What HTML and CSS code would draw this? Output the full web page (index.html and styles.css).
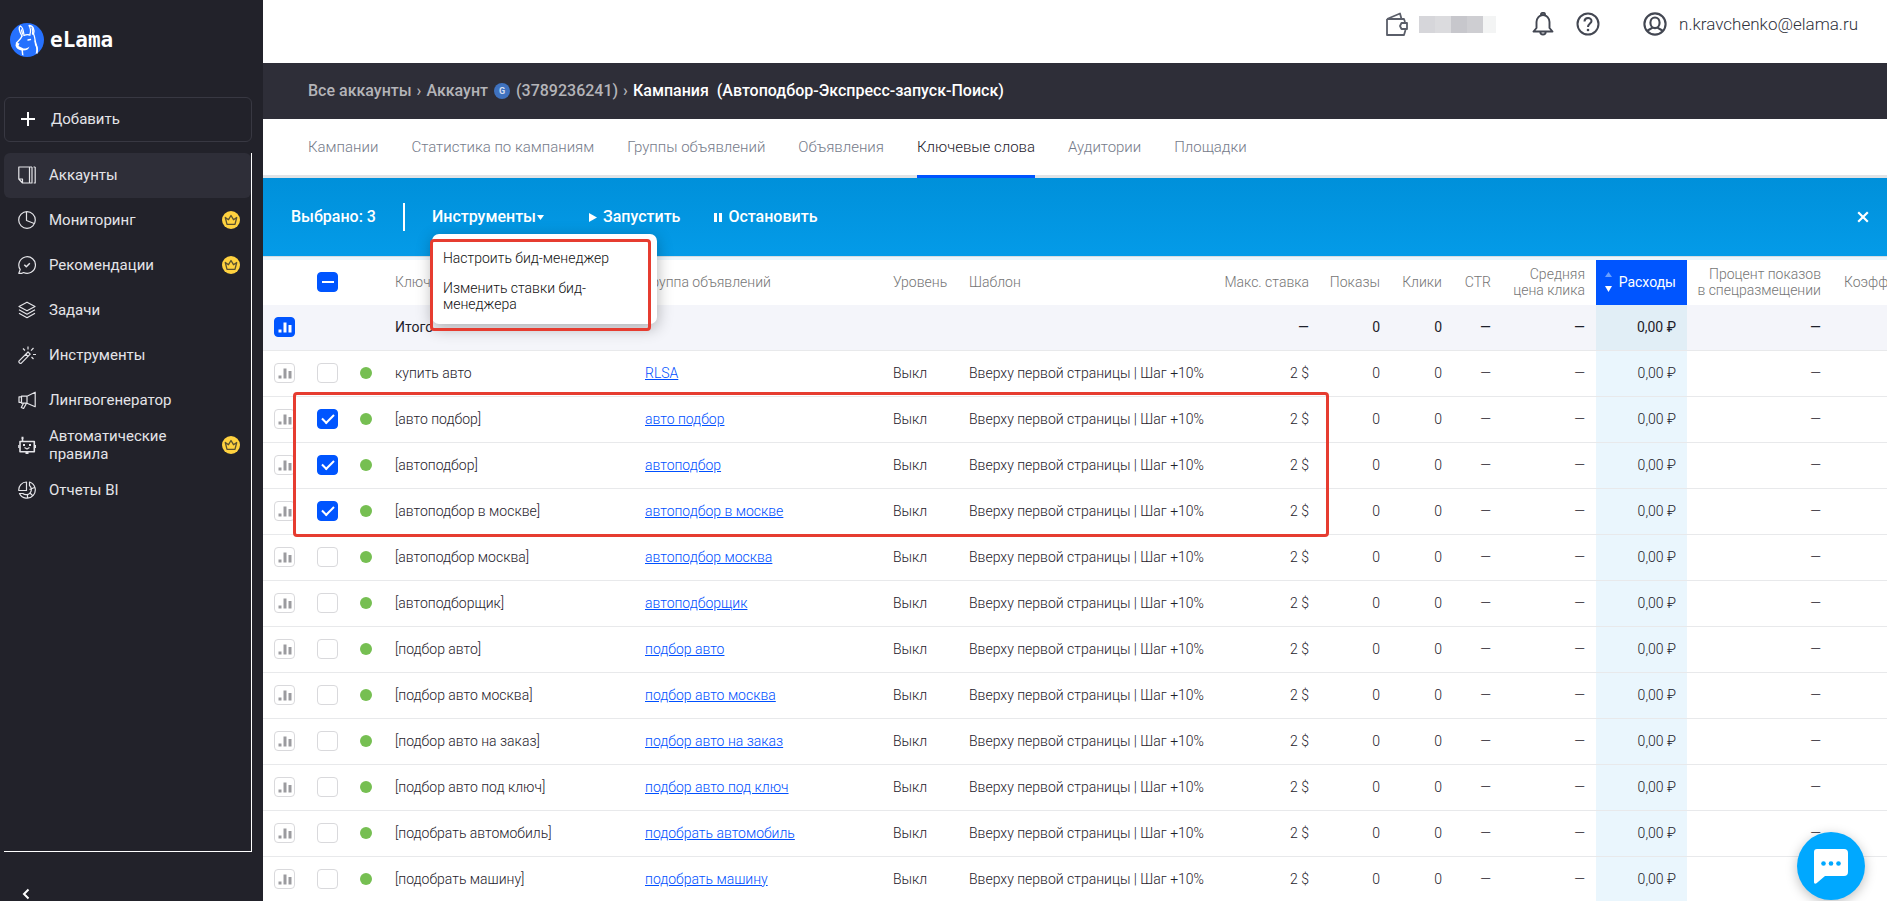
FILE: index.html
```html
<!DOCTYPE html>
<html lang="ru">
<head>
<meta charset="utf-8">
<title>eLama — Ключевые слова</title>
<link rel="stylesheet" href="styles.css">
</head>
<body>
<svg class="sprite" aria-hidden="true">
  <symbol id="chart" viewBox="0 0 14 12"><path d="M0.5 8.5h3v3h-3zM5.5 1.500h3v10h-3zM10.500 4h3v7.500h-3z" fill="currentColor"/></symbol>
  <symbol id="crown" viewBox="0 0 18 18"><circle cx="9" cy="9" r="9" fill="#ffd23f"/><path d="M5 13.300L3.300 6.500l3.200 2.200L9 4.500l2.500 4.200 3.200-2.200-1.700 6.800z" fill="none" stroke="#5b5130" stroke-width="1.300" stroke-linejoin="round"/></symbol>
</svg>
<div class="app">
  <aside class="sidebar">
    <a class="logo" href="#">
      <svg width="34" height="34" viewBox="0 0 34 34"><circle cx="17" cy="17" r="17" fill="#2671fe"/><g fill="none" stroke="#fff" stroke-width="1.300" stroke-linecap="round" stroke-linejoin="round"><path d="M12 13C9.500 9 8 4 10.500 3c2 1 3 5 3.500 9"/><path d="M11.500 7l1 4"/><path d="M20 11c1-3 .5-6-1-8.500 4 0 6 4 4.500 9"/><path d="M22 5c1 2 1 4 .5 6"/><path d="M14 12.500c2-1 4-1 6-.5"/><path d="M12 13c-1 3-4 5-5.500 7"/><path d="M24 12c1 3 1 6 2 9s2 5 1 9"/><path d="M18 17l2.500-.5" /></g><path d="M6 19.500l3.500 1-1 2.500 5 2.500c2 .3 4-.2 6-2-1 3-3 4-6.500 4l.5 5-1.500-.5-.5-4.500C8 27 6 25 5.500 22.500z" fill="#fff"/><path d="M24 16l3 6.500c1.200 2.500 1 5 .5 6.500L25.500 31c1.500-4 1-6-.5-9z" fill="#fff"/></svg>
      <span>eLama</span>
    </a>
    <button class="add" type="button">
      <svg width="18" height="18" viewBox="0 0 18 18"><path d="M9 2v14M2 9h14" stroke="#fff" stroke-width="2"/></svg>
      Добавить
    </button>
    <nav class="menu">
      <a class="item current" href="#"><svg class="ico" viewBox="0 0 18 18"><path d="M.8 1h10.700v16H4.500L.8 13zM.8 13h3.700v4M14 1v16h-2M17.200 1v16h-1.500M11.500 1H14M15.500 1h1.700"/></svg><span>Аккаунты</span></a>
      <a class="item" href="#"><svg class="ico" viewBox="0 0 18 18"><circle cx="9" cy="9" r="8.300"/><path d="M8.500 .8v8.700l7.700 3"/></svg><span>Мониторинг</span><svg class="crown"><use href="#crown"/></svg></a>
      <a class="item" href="#"><svg class="ico" viewBox="0 0 18 18"><path d="M.8 17.300l1.400-3.700a8.300 8.300 0 1 1 3.300 2.900l-1.500.8z"/><path d="M6.300 8.700l2 2 3.500-3.400" stroke-width="1.500"/></svg><span>Рекомендации</span><svg class="crown"><use href="#crown"/></svg></a>
      <a class="item" href="#"><svg class="ico" viewBox="0 0 18 18"><path d="M9 1.200l8 4.300-8 4.300-8-4.300zM1 8.800l8 4.400 8-4.400M1 12.300l8 4.400 8-4.400"/></svg><span>Задачи</span></a>
      <a class="item" href="#"><svg class="ico" viewBox="0 0 18 18"><path d="M.9 15.200L10 6l2.200 2.200-9.100 9.100c-1.500.3-2.400-.7-2.200-2.100zM7.800 8.200l2.200 2.200M10 .5v3M5 2.500l2 2M15.500 2l-2.500 2.700M15 8.500h3M13.500 11l2 2"/></svg><span>Инструменты</span></a>
      <a class="item" href="#"><svg class="ico" viewBox="0 0 18 18"><path d="M17.200 1.200v14.500L9 12.200H3.500V5.200H9zM9 5.200v7M3.500 5.800H1v5.500h2.500M5.500 12.200L3.300 16.500l2.300 1L8.500 12.300"/></svg><span>Лингвогенератор</span></a>
      <a class="item" href="#"><svg class="ico" viewBox="0 0 18 18"><path d="M2 5.500h14.300v10.300H2zM4.500 5.500V2" stroke-width="1.600"/><path d="M6.500 11.500l2.500 1.500 2.500-1.500M.8 9v3M17.400 9v3"/><path d="M5 8h2v2H5zM11 8h2v2h-2zM7.500 15.500h3v2.500h-3zM3.500 .8h2v2h-2z" fill="#e4e4e8" stroke="none"/></svg><span>Автоматические правила</span><svg class="crown"><use href="#crown"/></svg></a>
      <a class="item" href="#"><svg class="ico" viewBox="0 0 18 18"><path d="M8.500 9.500H.8A7.800 7.800 0 0 1 8.500 1zM11.500 1A8.300 8.300 0 1 1 1.500 12.500h3.300a5.200 5.200 0 1 0 6.700-8zM11.500 8.500l5-2M12 12l2.500 2.500M9.500 14v3"/></svg><span>Отчеты BI</span></a>
    </nav>
    <button class="collapse" type="button" aria-label="Свернуть меню"><svg width="8" height="12" viewBox="0 0 8 12"><path d="M6.500 1.500L2 6l4.500 4.500" fill="none" stroke="#fff" stroke-width="2"/></svg></button>
  </aside>

  <main class="main">
    <header class="topbar">
      <a class="wallet" href="#" aria-label="Баланс">
        <svg width="22" height="24" viewBox="0 0 22 24"><g fill="none" stroke="#5a5e69" stroke-width="1.800" stroke-linejoin="round"><path d="M1 7h17l1 3M1 7v16h17l1.500-5M1 7l13-5.500L15.500 7"/><path d="M15.500 11H21v6h-5.500l-1.500-3z"/></g></svg>
        <span class="balance"></span>
      </a>
      <button class="tool bell" type="button" aria-label="Уведомления"><svg width="22" height="24" viewBox="0 0 22 24"><path d="M1.500 19.500h19L17.500 16v-6a6.500 7 0 0 0-13 0v6zM9 3.500V2.300a2 1.500 0 0 1 4 0v1.200M8.300 20a2.700 2.500 0 0 0 5.400 0" fill="none" stroke="#434752" stroke-width="1.900" stroke-linejoin="round"/></svg></button>
      <button class="tool help" type="button" aria-label="Помощь"><svg width="24" height="24" viewBox="0 0 24 24"><g fill="none" stroke="#434752" stroke-width="2"><circle cx="12" cy="12" r="10.500"/><path d="M8.500 9.500c0-4.500 7-4.500 7-.5 0 2.500-3.500 2.700-3.500 6"/></g><circle cx="12" cy="18" r="1.300" fill="#434752"/></svg></button>
      <a class="user" href="#"><svg width="24" height="24" viewBox="0 0 24 24"><g fill="none" stroke="#434752" stroke-width="2.100"><circle cx="12" cy="12" r="10.600"/><ellipse cx="12" cy="10.800" rx="4.600" ry="5.300"/><path d="M4.500 19c1-2 3-1.500 5-3.500M19.500 19c-1-2-3-1.500-5-3.500"/></g></svg><span>n.kravchenko@elama.ru</span></a>
    </header>

    <nav class="crumbs">
      <a href="#">Все аккаунты</a><i>›</i><a href="#">Аккаунт <b>G</b> (3789236241)</a><i>›</i><strong>Кампания&nbsp; (Автоподбор-Экспресс-запуск-Поиск)</strong>
    </nav>

    <nav class="tabs">
      <a href="#">Кампании</a><a href="#">Статистика по кампаниям</a><a href="#">Группы объявлений</a><a href="#">Объявления</a><a class="on" href="#">Ключевые слова</a><a href="#">Аудитории</a><a href="#">Площадки</a>
    </nav>

    <section class="actions">
      <span class="count">Выбрано: 3</span>
      <div class="dropdown">
        <button type="button" class="act">Инструменты<svg width="7" height="5" viewBox="0 0 7 5"><path d="M0 0h7L3.500 5z" fill="#fff"/></svg></button>
        <div class="popup">
          <a href="#">Настроить бид-менеджер</a>
          <a href="#">Изменить ставки бид-<br>менеджера</a>
          <span class="mark mark-popup"></span>
        </div>
      </div>
      <button type="button" class="act run"><svg width="8" height="9" viewBox="0 0 8 9"><path d="M0 0l8 4.500L0 9z" fill="#fff"/></svg>Запустить</button>
      <button type="button" class="act"><svg width="8" height="9" viewBox="0 0 8 9"><path d="M0 0h3v9H0zM5 0h3v9H5z" fill="#fff"/></svg>Остановить</button>
      <button type="button" class="close" aria-label="Закрыть"><svg width="12" height="12" viewBox="0 0 12 12"><path d="M1.200 1.200l9.600 9.600M10.800 1.200l-9.600 9.600" stroke="#fff" stroke-width="2.200"/></svg></button>
    </section>

    <div class="grid">
      <table>
        <colgroup><col class="c-chart"><col class="c-check"><col class="c-dot"><col class="c-key"><col class="c-group"><col class="c-level"><col class="c-tpl"><col class="c-bid"><col class="c-shows"><col class="c-clicks"><col class="c-ctr"><col class="c-avg"><col class="c-cost"><col class="c-top"><col></colgroup>
        <thead>
          <tr><th></th><th><input type="checkbox" class="part" aria-label="Выбрать все"></th><th></th><th>Ключевое слово</th><th>Группа объявлений</th><th>Уровень</th><th>Шаблон</th><th class="n">Макс. ставка</th><th class="n">Показы</th><th class="n">Клики</th><th class="n">CTR</th><th class="n">Средняя<br>цена клика</th><th class="n sorted"><span class="sort"><svg width="7" height="20" viewBox="0 0 7 20"><path d="M3.500 0L7 5H0z" fill="#6aa0ff"/><path d="M0 14h7l-3.500 6z" fill="#fff"/></svg>Расходы</span></th><th class="n">Процент показов<br>в спецразмещении</th><th>Коэффициент</th></tr>
        </thead>
        <tbody>
          <tr class="total"><td><button type="button" class="stat on" aria-label="График"><svg><use href="#chart"/></svg></button></td><td></td><td></td><td>Итого</td><td></td><td></td><td></td><td class="n">—</td><td class="n">0</td><td class="n">0</td><td class="n">—</td><td class="n">—</td><td class="n cost">0,00 ₽</td><td class="n">—</td><td></td></tr>
          <tr><td><button type="button" class="stat" aria-label="График"><svg><use href="#chart"/></svg></button></td><td><input type="checkbox" aria-label="купить авто"></td><td><span class="dot"></span></td><td>купить авто</td><td><a href="#">RLSA</a></td><td>Выкл</td><td>Вверху первой страницы | Шаг +10%</td><td class="n">2 $</td><td class="n">0</td><td class="n">0</td><td class="n">—</td><td class="n">—</td><td class="n cost">0,00 ₽</td><td class="n">—</td><td></td></tr>
          <tr><td><button type="button" class="stat" aria-label="График"><svg><use href="#chart"/></svg></button></td><td><input type="checkbox" checked aria-label="авто подбор"></td><td><span class="dot"></span></td><td>[авто подбор]</td><td><a href="#">авто подбор</a></td><td>Выкл</td><td>Вверху первой страницы | Шаг +10%</td><td class="n">2 $</td><td class="n">0</td><td class="n">0</td><td class="n">—</td><td class="n">—</td><td class="n cost">0,00 ₽</td><td class="n">—</td><td></td></tr>
          <tr><td><button type="button" class="stat" aria-label="График"><svg><use href="#chart"/></svg></button></td><td><input type="checkbox" checked aria-label="автоподбор"></td><td><span class="dot"></span></td><td>[автоподбор]</td><td><a href="#">автоподбор</a></td><td>Выкл</td><td>Вверху первой страницы | Шаг +10%</td><td class="n">2 $</td><td class="n">0</td><td class="n">0</td><td class="n">—</td><td class="n">—</td><td class="n cost">0,00 ₽</td><td class="n">—</td><td></td></tr>
          <tr><td><button type="button" class="stat" aria-label="График"><svg><use href="#chart"/></svg></button></td><td><input type="checkbox" checked aria-label="автоподбор в москве"></td><td><span class="dot"></span></td><td>[автоподбор в москве]</td><td><a href="#">автоподбор в москве</a></td><td>Выкл</td><td>Вверху первой страницы | Шаг +10%</td><td class="n">2 $</td><td class="n">0</td><td class="n">0</td><td class="n">—</td><td class="n">—</td><td class="n cost">0,00 ₽</td><td class="n">—</td><td></td></tr>
          <tr><td><button type="button" class="stat" aria-label="График"><svg><use href="#chart"/></svg></button></td><td><input type="checkbox" aria-label="автоподбор москва"></td><td><span class="dot"></span></td><td>[автоподбор москва]</td><td><a href="#">автоподбор москва</a></td><td>Выкл</td><td>Вверху первой страницы | Шаг +10%</td><td class="n">2 $</td><td class="n">0</td><td class="n">0</td><td class="n">—</td><td class="n">—</td><td class="n cost">0,00 ₽</td><td class="n">—</td><td></td></tr>
          <tr><td><button type="button" class="stat" aria-label="График"><svg><use href="#chart"/></svg></button></td><td><input type="checkbox" aria-label="автоподборщик"></td><td><span class="dot"></span></td><td>[автоподборщик]</td><td><a href="#">автоподборщик</a></td><td>Выкл</td><td>Вверху первой страницы | Шаг +10%</td><td class="n">2 $</td><td class="n">0</td><td class="n">0</td><td class="n">—</td><td class="n">—</td><td class="n cost">0,00 ₽</td><td class="n">—</td><td></td></tr>
          <tr><td><button type="button" class="stat" aria-label="График"><svg><use href="#chart"/></svg></button></td><td><input type="checkbox" aria-label="подбор авто"></td><td><span class="dot"></span></td><td>[подбор авто]</td><td><a href="#">подбор авто</a></td><td>Выкл</td><td>Вверху первой страницы | Шаг +10%</td><td class="n">2 $</td><td class="n">0</td><td class="n">0</td><td class="n">—</td><td class="n">—</td><td class="n cost">0,00 ₽</td><td class="n">—</td><td></td></tr>
          <tr><td><button type="button" class="stat" aria-label="График"><svg><use href="#chart"/></svg></button></td><td><input type="checkbox" aria-label="подбор авто москва"></td><td><span class="dot"></span></td><td>[подбор авто москва]</td><td><a href="#">подбор авто москва</a></td><td>Выкл</td><td>Вверху первой страницы | Шаг +10%</td><td class="n">2 $</td><td class="n">0</td><td class="n">0</td><td class="n">—</td><td class="n">—</td><td class="n cost">0,00 ₽</td><td class="n">—</td><td></td></tr>
          <tr><td><button type="button" class="stat" aria-label="График"><svg><use href="#chart"/></svg></button></td><td><input type="checkbox" aria-label="подбор авто на заказ"></td><td><span class="dot"></span></td><td>[подбор авто на заказ]</td><td><a href="#">подбор авто на заказ</a></td><td>Выкл</td><td>Вверху первой страницы | Шаг +10%</td><td class="n">2 $</td><td class="n">0</td><td class="n">0</td><td class="n">—</td><td class="n">—</td><td class="n cost">0,00 ₽</td><td class="n">—</td><td></td></tr>
          <tr><td><button type="button" class="stat" aria-label="График"><svg><use href="#chart"/></svg></button></td><td><input type="checkbox" aria-label="подбор авто под ключ"></td><td><span class="dot"></span></td><td>[подбор авто под ключ]</td><td><a href="#">подбор авто под ключ</a></td><td>Выкл</td><td>Вверху первой страницы | Шаг +10%</td><td class="n">2 $</td><td class="n">0</td><td class="n">0</td><td class="n">—</td><td class="n">—</td><td class="n cost">0,00 ₽</td><td class="n">—</td><td></td></tr>
          <tr><td><button type="button" class="stat" aria-label="График"><svg><use href="#chart"/></svg></button></td><td><input type="checkbox" aria-label="подобрать автомобиль"></td><td><span class="dot"></span></td><td>[подобрать автомобиль]</td><td><a href="#">подобрать автомобиль</a></td><td>Выкл</td><td>Вверху первой страницы | Шаг +10%</td><td class="n">2 $</td><td class="n">0</td><td class="n">0</td><td class="n">—</td><td class="n">—</td><td class="n cost">0,00 ₽</td><td class="n">—</td><td></td></tr>
          <tr><td><button type="button" class="stat" aria-label="График"><svg><use href="#chart"/></svg></button></td><td><input type="checkbox" aria-label="подобрать машину"></td><td><span class="dot"></span></td><td>[подобрать машину]</td><td><a href="#">подобрать машину</a></td><td>Выкл</td><td>Вверху первой страницы | Шаг +10%</td><td class="n">2 $</td><td class="n">0</td><td class="n">0</td><td class="n">—</td><td class="n">—</td><td class="n cost">0,00 ₽</td><td class="n">—</td><td></td></tr>
        </tbody>
      </table>
      <span class="mark mark-rows"></span>
    </div>
  </main>
  <button class="chat" type="button" aria-label="Чат"><svg width="36" height="36" viewBox="0 0 36 36"><path d="M4 1h27a4 4 0 0 1 4 4v19a4 4 0 0 1-4 4H12l-8.500 7.200C2 36.200 1 35.500 1 34V4a3 3 0 0 1 3-3z" fill="#fff"/><g fill="#00a8ff"><circle cx="10.500" cy="15.500" r="2.300"/><circle cx="18" cy="15.500" r="2.300"/><circle cx="25.500" cy="15.500" r="2.300"/></g></svg></button>
</div>
</body>
</html>
```
FILE: styles.css
```css
* { box-sizing: border-box; }
body { margin: 0; font: 14px/16px Roboto, "Noto Sans", sans-serif; color: #1e212b; background: #fff; }
button { font: inherit; border: 0; padding: 0; background: none; cursor: pointer; }
a { text-decoration: none; color: inherit; }
svg { display: block; flex: none; }
.sprite { position: absolute; width: 0; height: 0; }
.app { display: flex; height: 100vh; overflow: hidden; }

/* Sidebar */
.sidebar { flex: none; width: 263px; padding: 23px 11px 0 4px; background: #22222a; color: #e4e4e8; display: flex; flex-direction: column; font-size: 15px; line-height: 18px; }
.logo { display: flex; align-items: center; gap: 6px; padding-left: 6px; margin-bottom: 40px; color: #fff; font: bold 21px/34px "DejaVu Sans Mono", monospace; }
.add { display: flex; align-items: center; gap: 14px; height: 45px; padding: 0 0 2px 14px; border: 1px solid #383842; border-radius: 6px; color: inherit; text-align: left; margin-bottom: 11px; }
.menu { flex: 1; border-right: 1px solid #fff; border-bottom: 1px solid #fff; }
.item { display: flex; align-items: center; height: 45px; padding: 0 11px 2px 14px; gap: 13px; border-radius: 6px; }
.item span { flex: 1; padding-right: 20px; }
.item.current { background: #2e2e38; }
.ico { width: 18px; height: 18px; fill: none; stroke: #e4e4e8; stroke-width: 1.2; stroke-linejoin: round; }
.crown { width: 18px; height: 18px; }
.collapse { height: 49px; padding: 35px 0 0 18px; align-self: flex-start; }

/* Page header */
.main { flex: 1; min-width: 0; display: flex; flex-direction: column; }
.topbar { flex: none; display: flex; justify-content: flex-end; height: 63px; padding: 12px 29px 0 0; font-size: 17px; font-weight: 300; line-height: 24px; color: #2f323c; }
.topbar > * { height: 24px; }
.wallet { display: flex; gap: 11px; align-items: center; margin-right: 36px; }
.balance { width: 77px; height: 17px; background: linear-gradient(90deg, #d6d6da 0 21%, #dbdbde 21% 41%, #c7c7cc 41% 62%, #ceced2 62% 83%, #f3f4f4 83%); }
.bell { margin-right: 22px; }
.help { margin-right: 43px; }
.user { display: flex; gap: 12px; }
.crumbs { flex: none; display: flex; align-items: center; gap: 5px; height: 56px; padding: 0 45px; background: #2e2e38; color: #b4b4b8; font-size: 16px; font-weight: 500; }
.crumbs a { display: flex; gap: 6px; align-items: center; }
.crumbs i { font-style: normal; }
.crumbs b { width: 16px; height: 16px; border-radius: 50%; background: #3f72bf; color: #d5dff0; font-size: 9px; text-align: center; }
.crumbs strong { color: #fff; font-weight: 500; }
.tabs { flex: none; display: flex; gap: 33px; height: 59px; padding: 0 45px; box-shadow: inset 0 -3px #e1e3e6; color: #757b8a; font-size: 15px; font-weight: 300; line-height: 56px; white-space: nowrap; }
.tabs .on { color: #1e212b; border-bottom: 3px solid #0055ff; }

/* Bulk actions */
.actions { flex: none; display: flex; align-items: center; height: 78px; padding: 0 18px 0 28px; background: linear-gradient(#0090da, #049be8); color: #fff; font-size: 16px; font-weight: 500; }
.count { padding-right: 27px; border-right: 2px solid #fff; line-height: 28px; margin-right: 27px; }
.dropdown { position: relative; margin-right: 45px; }
.act { display: flex; align-items: center; gap: 6px; color: #fff; height: 28px; }
.dropdown .act { gap: 1px; }
.run { margin-right: 34px; }
.close { margin-left: auto; }
.popup { position: absolute; z-index: 3; left: 0; top: 31px; width: 225px; padding: 16px 11px 12px; display: grid; gap: 14px; background: #fff; border-radius: 7px; box-shadow: 0 4px 16px rgba(0, 0, 0, .3); color: #111; font-size: 14px; font-weight: 300; white-space: nowrap; }
.mark { position: absolute; border: 3px solid #e63c30; border-radius: 4px; pointer-events: none; }
.mark-popup { left: -2px; top: 5px; width: 221px; height: 92px; }

/* Keywords table */
.grid { position: relative; flex: 1; min-height: 0; border-top: 1px solid #d5dde2; overflow: hidden; }
table { width: 100%; table-layout: fixed; border-collapse: separate; border-spacing: 0; border-top: 3px solid #ebf6fd; white-space: nowrap; }
th, td { padding: 0 11px 1px 12px; text-align: left; overflow: hidden; }
th { height: 45px; font-weight: 300; color: #757575; }
td { height: 46px; border-bottom: 1px solid #e8e9eb; font-weight: 300; }
th:nth-child(-n+3), td:nth-child(-n+3) { padding-left: 11px; }
th.n, td.n { text-align: right; padding-left: 0; }
.c-chart, .c-check { width: 43px; }
.c-dot { width: 34px; }
.c-key { width: 250px; }
.c-group { width: 248px; }
.c-level { width: 76px; }
.c-tpl { width: 256px; }
.c-bid { width: 107px; }
.c-shows { width: 71px; }
.c-clicks { width: 62px; }
.c-ctr { width: 49px; }
.c-avg { width: 94px; }
.c-cost { width: 91px; }
.c-top { width: 145px; }
th:last-child { padding-right: 0; text-overflow: clip; }
.sorted { background: #0055ff; color: #fff; font-weight: 400; }
.sort { display: flex; align-items: center; justify-content: flex-end; gap: 7px; }
.total { background: #f4f5fa; }
.total td { font-weight: 400; }
.cost { background: #eaf6fd; }
.total .cost { background: #e1eef6; }
td a { color: #0050ff; text-decoration: underline; }
.dot { display: block; width: 12px; height: 12px; border-radius: 50%; background: #76bf52; }
.stat { display: grid; place-items: center; width: 21px; height: 20px; border: 1px solid #d9d9dc; border-radius: 4px; color: #9b9b9f; }
.stat svg { width: 14px; height: 12px; }
.stat.on { background: #0055ff; border-color: #0055ff; color: #fff; }
input[type="checkbox"] { appearance: none; display: grid; place-items: center; width: 21px; height: 20px; margin: 0; border: 1px solid #d9d9dc; border-radius: 4px; background: #fff; }
input[type="checkbox"]:checked, input[type="checkbox"].part { background: #0055ff; border-color: #0055ff; }
input:checked::before { content: ""; width: 10px; height: 5px; margin-bottom: 3px; border: solid #fff; border-width: 0 0 2px 2px; transform: rotate(-45deg); }
input.part::before { content: ""; width: 12px; height: 2px; background: #fff; }
.mark-rows { left: 30px; top: 135px; width: 1036px; height: 145px; }

/* Chat launcher */
.chat { position: fixed; right: 22px; bottom: 1px; width: 68px; height: 68px; display: grid; place-items: center; border-radius: 50%; background: #00a8ff; box-shadow: 0 3px 12px rgba(0, 0, 0, .25); }
```
